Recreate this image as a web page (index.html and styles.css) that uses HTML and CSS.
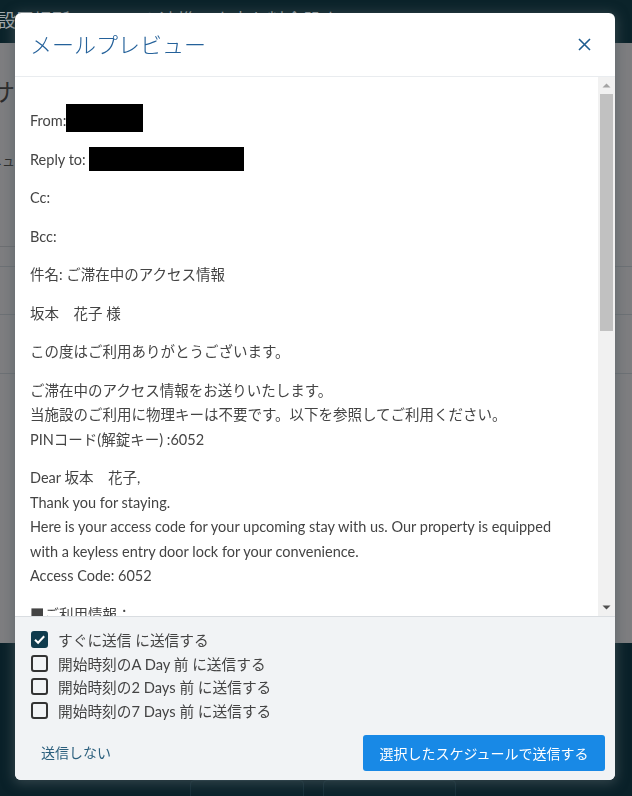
FILE: index.html
```html
<!DOCTYPE html>
<html lang="ja">
<head>
<meta charset="utf-8">
<title>メールプレビュー</title>
<link rel="stylesheet" href="styles.css">
</head>
<body>
<div class="app">
  <header class="app-header"><span class="crumb">設置場所・システム連携・定率お料金設定</span></header>
  <main class="app-main">
    <h1 class="page-title">サービス</h1>
    <div class="page-sub">メニュー</div>
    <div class="tab-line"></div>
    <div class="table">
      <div class="table-row head"></div>
      <div class="table-row"></div>
    </div>
  </main>
  <footer class="app-footer">
    <span class="ghost-btn"></span>
    <span class="ghost-btn wide"></span>
  </footer>
</div>

<div class="modal-layer">
  <div class="modal">
    <div class="modal-header">
      <h2 class="modal-title">メールプレビュー</h2>
      <button class="close" type="button" aria-label="閉じる">
        <svg width="13" height="13" viewBox="0 0 13 13"><path d="M1 1L12 12M12 1L1 12" stroke="#1d5c90" stroke-width="1.6" fill="none"/></svg>
      </button>
    </div>
    <div class="modal-body">
      <div class="mail">
        <p>From:<span class="redact r-from"></span></p>
        <p>Reply to: <span class="redact r-reply"></span></p>
        <p>Cc:</p>
        <p>Bcc:</p>
        <p>件名: ご滞在中のアクセス情報</p>
        <p>坂本　花子 様</p>
        <p>この度はご利用ありがとうございます。</p>
        <p>ご滞在中のアクセス情報をお送りいたします。<br>当施設のご利用に物理キーは不要です。以下を参照してご利用ください。<br>PINコード(解錠キー) :6052</p>
        <p>Dear 坂本　花子,<br>Thank you for staying.<br>Here is your access code for your upcoming stay with us. Our property is equipped with a keyless entry door lock for your convenience.<br>Access Code: 6052</p>
        <p>■ご利用情報：<br>チェックイン：2024年5月20日 15:00<br>チェックアウト：2024年5月22日 10:00<br>施設名：サンプルハウス<br>住所：東京都渋谷区1-2-3</p>
        <p>■Information:<br>Check-in: May 20, 2024 15:00<br>Check-out: May 22, 2024 10:00</p>
      </div>
      <div class="scrollbar" aria-hidden="true">
        <span class="sb-btn"><svg width="17" height="17" viewBox="0 0 17 17"><path d="M4.5 10.5h8L8.5 6.5z" fill="#a3a3a3"/></svg></span>
        <span class="sb-track"><span class="sb-thumb"></span></span>
        <span class="sb-btn"><svg width="17" height="17" viewBox="0 0 17 17"><path d="M4.5 6.5h8L8.5 10.5z" fill="#505050"/></svg></span>
      </div>
    </div>
    <div class="modal-footer">
      <ul class="schedules">
        <li class="schedule"><span class="box checked"><svg width="13" height="13" viewBox="0 0 13 13"><path d="M2 6.8L5.1 9.8L11.2 3.2" stroke="#fff" stroke-width="2" fill="none"/></svg></span><span>すぐに送信 に送信する</span></li>
        <li class="schedule"><span class="box"></span><span>開始時刻のA Day 前 に送信する</span></li>
        <li class="schedule"><span class="box"></span><span>開始時刻の2 Days 前 に送信する</span></li>
        <li class="schedule"><span class="box"></span><span>開始時刻の7 Days 前 に送信する</span></li>
      </ul>
      <div class="actions">
        <button class="link-btn" type="button">送信しない</button>
        <button class="primary-btn" type="button">選択したスケジュールで送信する</button>
      </div>
    </div>
  </div>
</div>
</body>
</html>
```

FILE: styles.css
```css
* { box-sizing: border-box; }
html, body { margin: 0; height: 100%; }
body {
  font-family: Lato, "Noto Sans CJK JP", sans-serif;
  background: #0a2129;
  overflow: hidden;
}

/* background application (dimmed) */
.app { height: 796px; display: flex; flex-direction: column; }
.app-header {
  height: 43px;
  flex: none;
  background: #0b232a;
  color: #a4abae;
  font-size: 18px;
  line-height: 40px;
  white-space: nowrap;
  overflow: hidden;
}
.crumb { display: block; margin-left: -2px; }
.app-main {
  flex: none;
  height: 600px;
  background: #7e7e80;
  overflow: hidden;
}
.page-title {
  margin: 31px 0 0 -9px;
  font-size: 24px;
  font-weight: 400;
  line-height: 36px;
  color: #2a2a2a;
}
.page-sub {
  margin: 40px 0 0 -24px;
  font-size: 13px;
  line-height: 20px;
  color: #2a2a2a;
}
.tab-line { height: 77px; width: 40%; border-bottom: 1px solid #6d6f72; }
.table { margin-top: 19px; }
.table-row { border-top: 1px solid #6d7175; height: 48px; }
.table-row + .table-row { height: 60px; border-bottom: 1px solid #6d7175; }
.app-footer {
  flex: 1;
  background: #0a2129;
  display: flex;
  gap: 19px;
  padding: 137px 0 0 190px;
}
.ghost-btn {
  width: 114px;
  height: 30px;
  border: 1px solid #16303a;
  border-radius: 4px;
  background: #0b232b;
}
.ghost-btn.wide { width: 133px; }

/* modal */
.modal-layer {
  position: fixed;
  inset: 0;
  padding: 13px 0 0 15px;
}
.modal {
  width: 600px;
  height: 767px;
  display: flex;
  flex-direction: column;
  background: #fff;
  border-radius: 6px;
  overflow: hidden;
  box-shadow: 0 2px 12px 2px rgba(80, 92, 98, 0.55);
}
.modal-header {
  flex: none;
  height: 64px;
  border-bottom: 1px solid #e9ecef;
  display: flex;
  align-items: center;
  justify-content: space-between;
  padding: 0 24px 0 15px;
}
.modal-title {
  margin: 0;
  font-size: 22px;
  font-weight: 300;
  color: #24619a;
  line-height: 30px;
}
.close {
  border: 0;
  background: none;
  padding: 0;
  width: 13px;
  height: 13px;
  display: flex;
}

.modal-body {
  flex: 1;
  min-height: 0;
  display: flex;
}
.mail {
  flex: 1;
  min-width: 0;
  overflow: hidden;
  padding: 17px 30px 0 15px;
  font-size: 14.5px;
  line-height: 24.5px;
  color: #444;
}
.mail p { margin: 14px 0; }
.redact {
  display: inline-block;
  background: #000;
  vertical-align: -6px;
  margin-top: -4px;
}
.r-from { width: 77px; height: 28px; }
.r-reply { width: 155px; height: 24px; }

.scrollbar {
  flex: none;
  width: 17px;
  background: #f1f1f1;
  display: flex;
  flex-direction: column;
}
.sb-btn { height: 17px; display: block; flex: none; }
.sb-btn svg { display: block; }
.sb-track { flex: 1; display: block; }
.sb-thumb {
  display: block;
  height: 237px;
  margin: 0 2px;
  background: #c1c1c1;
}

.modal-footer {
  flex: none;
  height: 164px;
  background: #f1f3f5;
  border-top: 1px solid #d9dde1;
  padding: 11px 10px 9px 16px;
  display: flex;
  flex-direction: column;
}
.schedules { list-style: none; margin: 0; padding: 0; }
.schedule {
  height: 23.6px;
  display: flex;
  align-items: center;
  gap: 10px;
  font-size: 14.7px;
  color: #444;
}
.box {
  width: 17px;
  height: 17px;
  border: 2px solid #333;
  border-radius: 3px;
  display: flex;
  align-items: center;
  justify-content: center;
  flex: none;
}
.box.checked { background: #0f3b4d; border-color: #0f3b4d; }

.actions {
  margin-top: auto;
  display: flex;
  align-items: center;
  justify-content: space-between;
}
.link-btn {
  border: 0;
  background: none;
  padding: 0 10px;
  font: inherit;
  font-size: 14px;
  color: #2b5f7d;
  line-height: 36px;
}
.primary-btn {
  height: 36px;
  width: 242px;
  border: 0;
  border-radius: 3px;
  background: #1889e6;
  color: #fff;
  font: inherit;
  font-size: 14px;
  padding: 0;
}
```
